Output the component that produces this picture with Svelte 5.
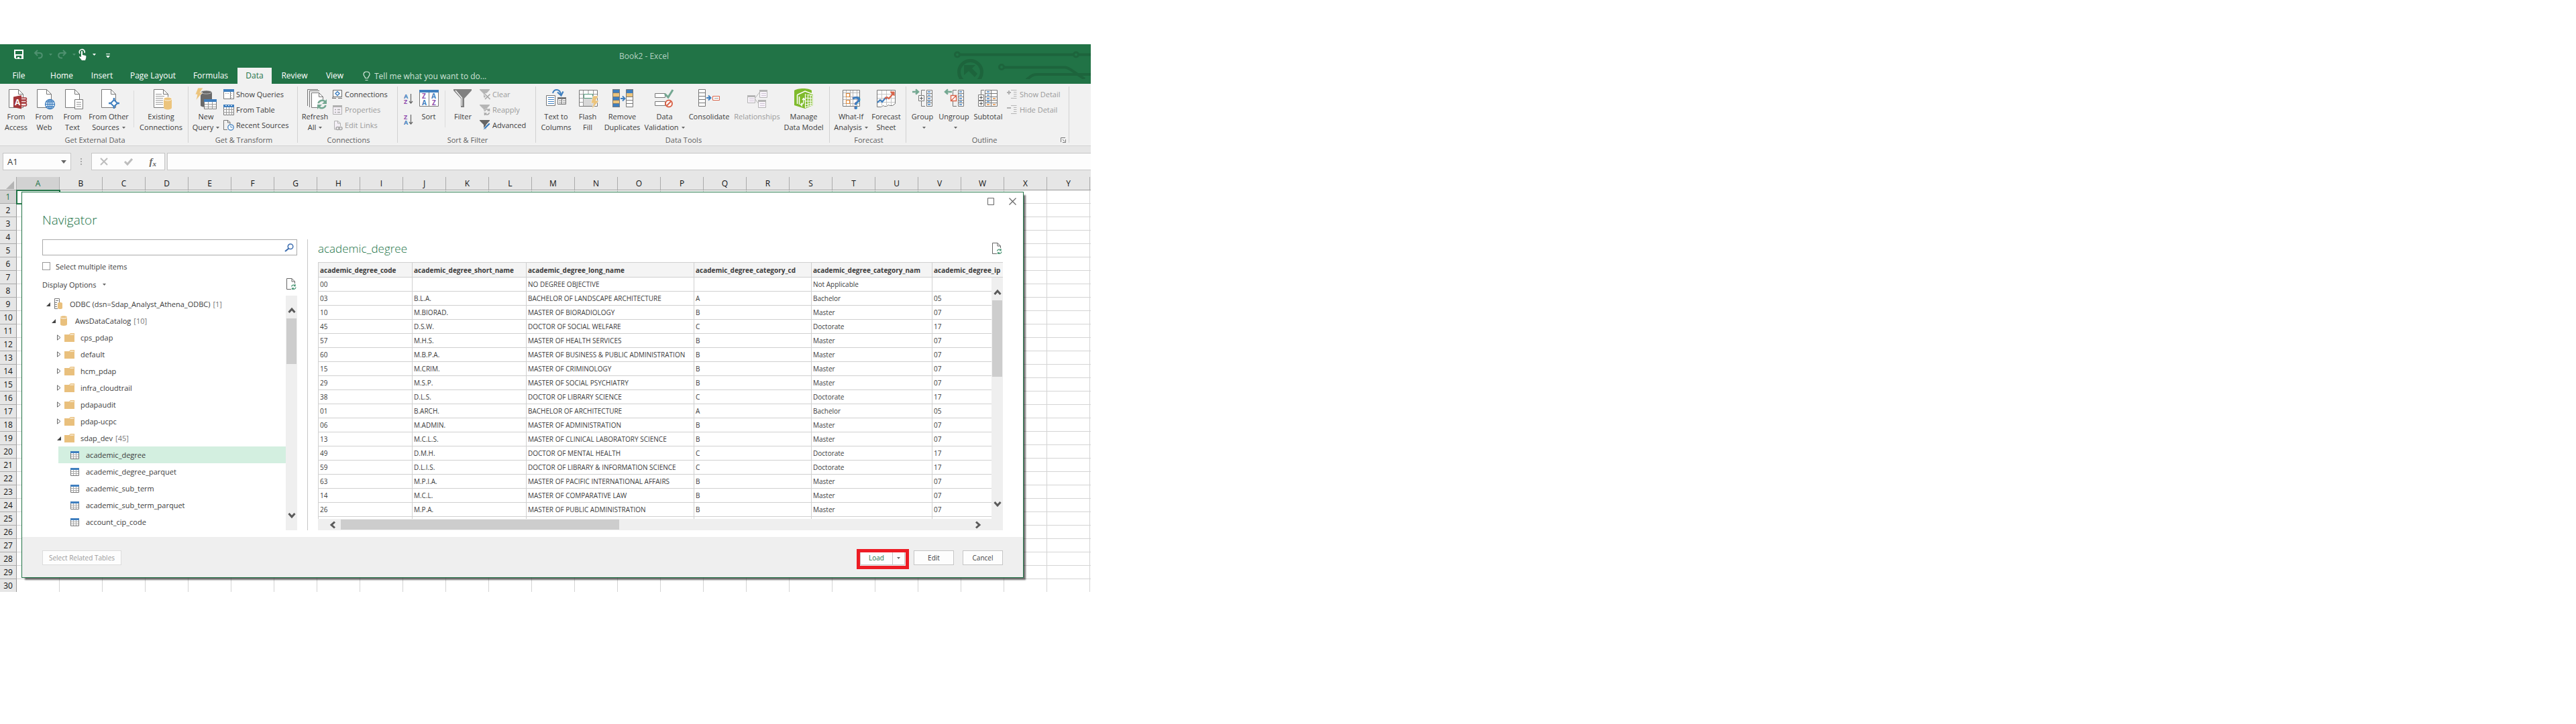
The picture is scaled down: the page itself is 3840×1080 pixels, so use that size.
<script>
  const tabs = [
    { label: 'Home', width: 60 },
    { label: 'Insert', width: 56 },
    { label: 'Page Layout', width: 92 },
    { label: 'Formulas', width: 76 },
    { label: 'Data', width: 51, active: true },
    { label: 'Review', width: 64 },
    { label: 'View', width: 52 },
  ];

  const groups = [
    {
      label: 'Get External Data', width: 280,
      items: [
        { type: 'big', icon: 'access', lines: ['From', 'Access'], width: 42 },
        { type: 'big', icon: 'web', lines: ['From', 'Web'], width: 42 },
        { type: 'big', icon: 'text', lines: ['From', 'Text'], width: 42 },
        { type: 'big', icon: 'other', lines: ['From Other', 'Sources'], width: 66, caret: true },
        { type: 'line' },
        { type: 'big', icon: 'existing', lines: ['Existing', 'Connections'], width: 72 },
      ],
    },
    {
      label: 'Get & Transform', width: 162,
      items: [
        { type: 'big', icon: 'query', lines: ['New', 'Query'], width: 46, caret: true },
        { type: 'stack', rows: [['queries', 'Show Queries'], ['fromtable', 'From Table'], ['recent', 'Recent Sources']] },
      ],
    },
    {
      label: 'Connections', width: 148,
      items: [
        { type: 'big', icon: 'refresh', lines: ['Refresh', 'All'], width: 45, caret: true },
        { type: 'stack', rows: [['conn', 'Connections'], ['props', 'Properties', true], ['links', 'Edit Links', true]] },
      ],
    },
    {
      label: 'Sort & Filter', width: 205,
      items: [
        { type: 'az' },
        { type: 'big', icon: 'sort', lines: ['Sort'], width: 40 },
        { type: 'line' },
        { type: 'big', icon: 'filter', lines: ['Filter'], width: 44 },
        { type: 'stack', rows: [['clear', 'Clear', true], ['reapply', 'Reapply', true], ['advanced', 'Advanced']] },
      ],
    },
    {
      label: 'Data Tools', width: 437,
      items: [
        { type: 'big', icon: 'columns', lines: ['Text to', 'Columns'], width: 54 },
        { type: 'big', icon: 'flash', lines: ['Flash', 'Fill'], width: 40 },
        { type: 'big', icon: 'dupes', lines: ['Remove', 'Duplicates'], width: 63 },
        { type: 'big', icon: 'validate', lines: ['Data', 'Validation'], width: 63, caret: true },
        { type: 'big', icon: 'consolidate', lines: ['Consolidate'], width: 70 },
        { type: 'big', icon: 'relations', lines: ['Relationships'], width: 73, disabled: true },
        { type: 'big', icon: 'model', lines: ['Manage', 'Data Model'], width: 66 },
      ],
    },
    {
      label: 'Forecast', width: 113,
      items: [
        { type: 'big', icon: 'whatif', lines: ['What-If', 'Analysis'], width: 57, caret: true },
        { type: 'big', icon: 'forecast', lines: ['Forecast', 'Sheet'], width: 48 },
      ],
    },
    {
      label: 'Outline', width: 242, launcher: true,
      items: [
        { type: 'big', icon: 'group', lines: ['Group', ''], width: 42, caret: true },
        { type: 'big', icon: 'ungroup', lines: ['Ungroup', ''], width: 52, caret: true },
        { type: 'big', icon: 'subtotal', lines: ['Subtotal'], width: 50 },
        { type: 'stack', rows: [['showdetail', 'Show Detail', true], ['hidedetail', 'Hide Detail', true]] },
      ],
    },
  ];

  const columns = [...'ABCDEFGHIJKLMNOPQRSTUVWXY'];
  const sheetRows = Array.from({ length: 30 }, (_, i) => i + 1);

  const tree = [
    { level: 0, icon: 'server', name: 'ODBC (dsn=Sdap_Analyst_Athena_ODBC)', count: 1, open: true },
    { level: 1, icon: 'database', name: 'AwsDataCatalog', count: 10, open: true },
    { level: 2, icon: 'folder', name: 'cps_pdap', open: false },
    { level: 2, icon: 'folder', name: 'default', open: false },
    { level: 2, icon: 'folder', name: 'hcm_pdap', open: false },
    { level: 2, icon: 'folder', name: 'infra_cloudtrail', open: false },
    { level: 2, icon: 'folder', name: 'pdapaudit', open: false },
    { level: 2, icon: 'folder', name: 'pdap-ucpc', open: false },
    { level: 2, icon: 'folder', name: 'sdap_dev', count: 45, open: true },
    { level: 3, icon: 'table', name: 'academic_degree', selected: true },
    { level: 3, icon: 'table', name: 'academic_degree_parquet' },
    { level: 3, icon: 'table', name: 'academic_sub_term' },
    { level: 3, icon: 'table', name: 'academic_sub_term_parquet' },
    { level: 3, icon: 'table', name: 'account_cip_code' },
  ];

  const fields = [
    'academic_degree_code', 'academic_degree_short_name', 'academic_degree_long_name',
    'academic_degree_category_cd', 'academic_degree_category_nam', 'academic_degree_ip',
  ];

  const records = [
    ['00', '', 'NO DEGREE OBJECTIVE', '', 'Not Applicable', ''],
    ['03', 'B.L.A.', 'BACHELOR OF LANDSCAPE ARCHITECTURE', 'A', 'Bachelor', '05'],
    ['10', 'M.BIORAD.', 'MASTER OF BIORADIOLOGY', 'B', 'Master', '07'],
    ['45', 'D.S.W.', 'DOCTOR OF SOCIAL WELFARE', 'C', 'Doctorate', '17'],
    ['57', 'M.H.S.', 'MASTER OF HEALTH SERVICES', 'B', 'Master', '07'],
    ['60', 'M.B.P.A.', 'MASTER OF BUSINESS & PUBLIC ADMINISTRATION', 'B', 'Master', '07'],
    ['15', 'M.CRIM.', 'MASTER OF CRIMINOLOGY', 'B', 'Master', '07'],
    ['29', 'M.S.P.', 'MASTER OF SOCIAL PSYCHIATRY', 'B', 'Master', '07'],
    ['38', 'D.L.S.', 'DOCTOR OF LIBRARY SCIENCE', 'C', 'Doctorate', '17'],
    ['01', 'B.ARCH.', 'BACHELOR OF ARCHITECTURE', 'A', 'Bachelor', '05'],
    ['06', 'M.ADMIN.', 'MASTER OF ADMINISTRATION', 'B', 'Master', '07'],
    ['13', 'M.C.L.S.', 'MASTER OF CLINICAL LABORATORY SCIENCE', 'B', 'Master', '07'],
    ['49', 'D.M.H.', 'DOCTOR OF MENTAL HEALTH', 'C', 'Doctorate', '17'],
    ['59', 'D.L.I.S.', 'DOCTOR OF LIBRARY & INFORMATION SCIENCE', 'C', 'Doctorate', '17'],
    ['63', 'M.P.I.A.', 'MASTER OF PACIFIC INTERNATIONAL AFFAIRS', 'B', 'Master', '07'],
    ['14', 'M.C.L.', 'MASTER OF COMPARATIVE LAW', 'B', 'Master', '07'],
    ['26', 'M.P.A.', 'MASTER OF PUBLIC ADMINISTRATION', 'B', 'Master', '07'],
    ['', '', '', '', '', ''],
  ];
</script>

{#snippet caret()}
  <svg class="caret" width="5" height="3" viewBox="0 0 5 3" aria-hidden="true"><path d="M0 0h5L2.5 3z" fill="currentColor" /></svg>
{/snippet}

{#snippet page()}
  <path d="M5.5 1.5h14l7 7v20h-21z" fill="#fff" stroke="#777" />
  <path d="M19.5 1.5v7h7" fill="none" stroke="#777" />
{/snippet}

{#snippet bigIcon(name)}
  <svg width="32" height="32" viewBox="0 0 32 32" fill="none" aria-hidden="true">
    {#if name === 'access'}
      {@render page()}
      <path d="M23 14h7c2 0 2 3 0 3h-7m0 1h7c2 0 2 3 0 3h-7m0 1h7c2 0 2 4 0 4h-7z" fill="#f7e6e7" stroke="#a4373a" stroke-width="1.6" />
      <path d="M12 12.500l12-2.500v20.500l-12-2.500z" fill="#a4373a" />
      <text x="14" y="25" font-size="12" font-weight="700" fill="#fff" font-family="Open Sans, sans-serif">A</text>
    {:else if name === 'web'}
      {@render page()}
      <g stroke="#3f7fbf" stroke-width="1.300">
        <circle cx="24.500" cy="23.500" r="7" fill="#fff" />
        <ellipse cx="24.500" cy="23.500" rx="3.200" ry="7" />
        <path d="M17.500 23.500h14M24.500 16.500v14M18.500 20h12M18.500 27h12" />
      </g>
    {:else if name === 'text'}
      {@render page()}
      <path d="M19.500 16.500h12v14h-12z" fill="#fff" stroke="#777" />
      <path d="M22 20.500h7M22 23.500h7M22 26.500h7" stroke="#999" />
    {:else if name === 'other'}
      {@render page()}
      <path d="M24 14v16M16 22h16" stroke="#3f7fbf" stroke-width="2.500" />
      <path d="M24 17l5 5-5 5-5-5z" fill="#fff" stroke="#3f7fbf" stroke-width="2" />
    {:else if name === 'existing'}
      {@render page()}
      <path d="M8 8.500h9M8 11.500h13M8 14.500h11M8 17.500h11M8 20.500h11M8 23.500h11" stroke="#999" />
      <path d="M20 15.500v13c0 4 12 4 12 0v-13z" fill="#ecc47c" />
      <ellipse cx="26" cy="15.500" rx="6" ry="2.500" fill="#ecc47c" stroke="#fff" stroke-width=".8" />
    {:else if name === 'query'}
      <path d="M8 5.500v20c0 3 17 3 17 0v-20z" fill="#6a6a6a" />
      <ellipse cx="16.500" cy="5.500" rx="8" ry="2.500" fill="#6a6a6a" stroke="#ddd" stroke-width=".7" />
      <path d="M4 -1h8L7 6h4L1 18 3 9H0z" fill="#ecc47c" stroke="#f1f1f1" stroke-width=".8" />
      <path d="M13.500 16.500h18v14h-18z" fill="#fff" stroke="#777" />
      <path d="M14 23.500h17M14 27.500h17M19.500 20v11M25.500 20v11" stroke="#999" />
      <path d="M13 16h19v4H13z" fill="#3f7fbf" />
    {:else if name === 'refresh'}
      <path d="M4.500 26V1.500H20M7.500 28V3.500H22" stroke="#777" />
      <path d="M10.500 6.500h11l6 6v16h-17z" fill="#fff" stroke="#777" />
      <path d="M21.500 6.500v6h6" stroke="#777" />
      <circle cx="26" cy="23.500" r="7" fill="#f1f1f1" />
      <path d="M20.500 22a6 6 0 0 1 10-2.500M31.500 25a6 6 0 0 1-10 2.500" stroke="#74a892" stroke-width="2.600" />
      <path d="M33 16v7h-7zM19 31v-7h7z" fill="#74a892" />
    {:else if name === 'sort'}
      <path d="M2.500 2.500h28v24h-28z" fill="#fff" stroke="#777" />
      <path d="M2 2h29v4H2z" fill="#3f7fbf" />
      <path d="M16.500 6v20" stroke="#777" />
      <g font-size="10" font-weight="700" font-family="Open Sans, sans-serif">
        <text x="6" y="15" fill="#8f4fae">Z</text><text x="20" y="15" fill="#3f7fbf">A</text>
        <text x="6" y="25" fill="#3f7fbf">A</text><text x="21" y="25" fill="#8f4fae">Z</text>
      </g>
    {:else if name === 'filter'}
      <path d="M2 1h27v2L18 15v13h-5V15L2 3z" fill="#808080" />
      <path d="M5 3l9.500 11v12" stroke="#fff" stroke-width="1.200" />
    {:else if name === 'columns'}
      <path d="M1.500 10.500h13v15h-13z" fill="#fff" stroke="#777" />
      <path d="M4 13.500h9M4 16.500h9M4 19.500h9M4 22.500h9" stroke="#3f7fbf" />
      <path d="M18.500 13.500h12v10h-12z" fill="#fff" stroke="#777" />
      <path d="M18 13h13v3H18z" fill="#777" />
      <path d="M20 18.500h4m2 0h4M20 21.500h4m2 0h4M24.500 16v8" stroke="#777" />
      <path d="M11 7c2-7 11-7 12 2" stroke="#3f7fbf" stroke-width="2" />
      <path d="M18 5.500l5.500 5 3-6" stroke="#3f7fbf" stroke-width="2.200" />
    {:else if name === 'flash'}
      <path d="M3.500 2.500h27v24h-27z" fill="#fff" stroke="#777" />
      <path d="M4 8.500h26M4 14.500h26M4 20.500h26M9.500 3v23M24.500 3v23M17 3v5" stroke="#999" />
      <path d="M10 15h14v11H10z" fill="#d8d8d8" />
      <path d="M10.500 8.500h13v6h-13z" fill="#fff" stroke="#4e9878" />
      <path d="M24 11h8l-4 7h5L22 31l3-9h-4z" fill="#ecc47c" stroke="#f1f1f1" stroke-width=".6" />
    {:else if name === 'dupes'}
      <path d="M1 1h11v27H1z" fill="#3f7fbf" /><path d="M1 7h11v5H1zM1 17h11v5H1z" fill="#ecc47c" />
      <path d="M22 1h10v6H22z" fill="#3f7fbf" /><path d="M22 7h10v5H22z" fill="#ecc47c" /><path d="M22 12h10v16H22z" fill="#fff" />
      <path d="M1.500 1.500h10v26h-10zM21.500 1.500h10v26h-10zM1 6.500h10M1 12.500h10M1 17.500h10M1 22.500h10M22 12.500h10M22 17.500h10M22 22.500h10" stroke="#777" />
      <path d="M13 15h6M16 11.500l3.500 3.500-3.500 3.500" stroke="#3f7fbf" stroke-width="2" />
    {:else if name === 'validate'}
      <path d="M1.500 7.500h15v6h-15zM1.500 19.500h15v6h-15z" fill="#fff" stroke="#777" />
      <path d="M16 8l5 5L28 2" stroke="#74a892" stroke-width="3" />
      <circle cx="22" cy="22.500" r="5" fill="#fff" stroke="#d9644a" stroke-width="2" />
      <path d="M25.500 19l-7 7" stroke="#d9644a" stroke-width="2" />
    {:else if name === 'consolidate'}
      <path d="M.5 1.500h10v25H.5z" fill="#fff" stroke="#777" />
      <path d="M1 6.500h9M1 11.500h9M1 16.500h9M1 21.500h9" stroke="#777" />
      <path d="M12 14h6M15 10.500l3.500 3.500-3.500 3.500" stroke="#3f7fbf" stroke-width="2" />
      <path d="M21.500 11.500h10v6h-10z" fill="#fff" stroke="#d9644a" /><path d="M24 14.500h6" stroke="#999" />
    {:else if name === 'relations'}
      <path d="M12 15l7-9M12 15l6 8" stroke="#b5b5b5" />
      <path d="M1.500 10.500h11v11h-11zM19.500 2.500h11v11h-11zM17.500 17.500h11v11h-11z" fill="#f7f3f9" stroke="#b5b5b5" />
      <path d="M1 10h12v3H1zM19 2h12v3H19zM17 17h12v3H17z" fill="#b5b5b5" />
      <path d="M4 15.500h7M4 18.500h7M22 7.500h7M22 10.500h7M20 22.500h7M20 25.500h7" stroke="#d0c4d6" />
    {:else if name === 'model'}
      <path d="M2 3C7-1 24-1 28 3v4l2 1v17l-12 5L2 25z" fill="#7fba2c" />
      <path d="M6.500 9.500L18 4l12 4.500M6.500 9.500V23M9.500 12v12" stroke="#fff" stroke-width="1.500" />
      <path d="M18.500 8v21M18 8.500l11 2v14L18 28M22.500 9v18M26 10v15M18 14l11 1M18 19h11M18 24l11-2" stroke="#fff" stroke-width="1.200" />
      <path d="M12 24c4 0 4-2 4-9M14 17l2-2.500 2 2.500M14 21.500L11.500 24l2.500 2.500" stroke="#fff" stroke-width="1.300" />
    {:else if name === 'whatif'}
      <path d="M3.500 2.500h25v24h-25z" fill="#fff" stroke="#777" />
      <path d="M4 6.500h24M4 12.500h24M4 16.500h24M4 22.500h24M8.500 3v23M14.500 3v23M18.500 3v23M24.500 3v23" stroke="#b5b5b5" />
      <path d="M8.500 7.500h5v5h-5zM8.500 17.500h5v5h-5z" fill="#fff" stroke="#e08a3c" stroke-width="1.200" />
      <text x="17" y="31" font-size="27" font-weight="700" fill="#3f7fbf" font-family="Open Sans, sans-serif">?</text>
    {:else if name === 'forecast'}
      <path d="M2.500 2.500h27v20l-4 3h-4l-2-1-3 2h-3l-2-1-3 2h-6z" fill="#fff" stroke="#777" />
      <path d="M3 8.500h26M3 14.500h26M3 20.500h26M9.500 3v22M16.500 3v22M23.500 3v22" stroke="#c4c4c4" />
      <path d="M3 21l4-4 3 3 5-6 2 2" stroke="#3f7fbf" stroke-width="2.200" />
      <path d="M14 15l3-2 3 2 7-8" stroke="#d9644a" stroke-width="2.200" /><path d="M22 5h6v6z" fill="#d9644a" stroke="#d9644a" />
    {:else if name === 'group' || name === 'ungroup'}
      <path d="M22.500 2.500h8v24h-8z" fill="#fff" stroke="#777" />
      <path d="M22 7.500h8M22 12.500h8M22 17.500h8M22 21.500h8" stroke="#777" />
      <path d="M24 5h4M24 10h4M24 15h4M24 19.500h4M24 24h4" stroke="#3f7fbf" stroke-width="1.300" />
      <path d="M20 2.500h-5.500v8M14.500 19v7.500H20" stroke="#777" />
      {#if name === 'group'}
        <path d="M1 5h9M6 1.500L10 5l-4 3.500" stroke="#74a892" stroke-width="2.400" />
        <path d="M10.500 10.500h8v8h-8z" fill="#fff" stroke="#777" /><path d="M12 14.500h5M14.500 12v5" stroke="#555" />
      {:else}
        <path d="M13 5H3M7 1.500L3 5l4 3.500" stroke="#74a892" stroke-width="2.400" />
        <path d="M11.500 10.500h8v8h-8zM12 18l7-7" fill="#fff" stroke="#d9644a" stroke-width="1.400" />
      {/if}
    {:else if name === 'subtotal'}
      <path d="M11.500 2.500h18v24h-18z" fill="#fff" stroke="#777" />
      <path d="M11 7.500h18M11 12.500h18M11 17.500h18M11 21.500h18M20.500 3v23" stroke="#777" />
      <path d="M14 5h4M14 10h4M14 15h4M14 19.500h4" stroke="#3f7fbf" stroke-width="1.300" />
      <path d="M23 15h4M23 24h4M14 24h4" stroke="#e08a3c" stroke-width="1.300" />
      <path d="M10 2.500H5.500v8" stroke="#777" />
      <path d="M1.500 9.500h8v8h-8zM1.500 18.500h8v8h-8z" fill="#fff" stroke="#777" /><path d="M3 13.500h5M5.500 11v5M3 22.500h5M5.500 20v5" stroke="#555" />
    {/if}
  </svg>
{/snippet}

{#snippet smallIcon(name)}
  <svg width="16" height="16" viewBox="0 0 16 16" fill="none" aria-hidden="true">
    {#if name === 'queries'}
      <path d="M.5 1.500h15v13H.5z" fill="#fff" stroke="#777" /><path d="M0 0h16v4H0z" fill="#3f7fbf" />
      <path d="M10.500 4v10" stroke="#777" /><path d="M3 6.500h6M12 6.500h2M12 9.500h2M12 12.500h2" stroke="#999" stroke-dasharray="1 1" />
    {:else if name === 'fromtable'}
      <path d="M.5.500h15v15H.5z" fill="#fff" stroke="#777" /><path d="M0 0h16v4H0z" fill="#3f7fbf" />
      <path d="M3 1.500h2M7 1.500h2M11 1.500h2" stroke="#fff" /><path d="M0 7.500h16M0 11.500h16M4.500 4v12M8.500 4v12M12.500 4v12" stroke="#999" />
    {:else if name === 'recent'}
      <path d="M6 14.500H.5v-14H7l3 3v3M6.500.5V4H10" stroke="#777" />
      <circle cx="11" cy="11" r="4.200" fill="#fff" stroke="#3f7fbf" stroke-width="1.300" /><path d="M11 8.500V11h2.500" stroke="#3f7fbf" />
    {:else if name === 'conn'}
      <path d="M1.500 1.500h13v10h-13z" fill="#fff" stroke="#666" /><path d="M0 13.500h6M9 13.500h6M1 11.500v2" stroke="#666" />
      <path d="M8 3.500L11 6.500 8 9.500 5 6.500z" stroke="#3f7fbf" stroke-width="1.500" />
    {:else if name === 'props'}
      <path d="M1.500 1.500h13v13h-13z" fill="#f3eef5" stroke="#b0b0b0" /><path d="M1 1h14v3H1z" fill="#b0b0b0" />
      <path d="M4 7.500h2M8 7.500h4M4 11.500h2M8 11.500h4" stroke="#a8a8a8" stroke-width="1.500" />
    {:else if name === 'links'}
      <path d="M6 14H3.500V1.500H9l3.500 3.500v4M8.500 1.500V5h4" fill="#f3eef5" stroke="#b0b0b0" />
      <rect x="6" y="10.500" width="5" height="4" rx="2" stroke="#a8a8a8" stroke-width="1.500" /><rect x="10" y="10.500" width="5" height="4" rx="2" stroke="#a8a8a8" stroke-width="1.500" />
    {:else if name === 'clear' || name === 'reapply' || name === 'advanced'}
      <path d="M0 0h15v1L9.500 7v7L6 12V7L0 1z" fill={name === 'advanced' ? '#666' : '#b5b5b5'} />
      {#if name === 'clear'}
        <path d="M8 7l8 8M16 7l-8 8" stroke="#f1f1f1" stroke-width="4" /><path d="M8 7.500l7.500 7.500M15.500 7.500L8 15" stroke="#a8a8a8" stroke-width="1.600" />
      {:else if name === 'reapply'}
        <circle cx="11" cy="11" r="5" fill="#f1f1f1" /><path d="M7.500 10a4 4 0 0 1 7-1.500V6m0 3h-3M14.500 12a4 4 0 0 1-7 1.500V16m0-3h3" stroke="#a8a8a8" stroke-width="1.500" />
      {:else}
        <path d="M5 15l2-4 7-7 2 2-7 7z" fill="#3f7fbf" stroke="#f1f1f1" stroke-width=".8" />
      {/if}
    {:else if name === 'showdetail' || name === 'hidedetail'}
      <path d="M6 1.500h8.500M10 4.500h4.500M10 7.500h4.500M10 10.500h4.500M6 13.500h8.500" stroke="#b5b5b5" />
      <path d="M0 5h6" stroke="#b0b0b0" stroke-width="2" />
      {#if name === 'showdetail'}<path d="M3 2v6" stroke="#b0b0b0" stroke-width="2" />{/if}
    {/if}
  </svg>
{/snippet}

{#snippet azIcon(first, second)}
  <svg width="16" height="18" viewBox="0 0 16 18" fill="none" aria-hidden="true">
    <g font-size="9" font-weight="700" font-family="Open Sans, sans-serif">
      <text x="1" y="8" fill={first === 'A' ? '#3f7fbf' : '#8f4fae'}>{first}</text>
      <text x="1" y="16" fill={second === 'A' ? '#3f7fbf' : '#8f4fae'}>{second}</text>
    </g>
    <path d="M11.500 1v14M9 12l2.500 3 2.500-3" stroke="#666" stroke-width="1.200" />
  </svg>
{/snippet}

{#snippet refreshPage()}
  <svg width="15" height="18" viewBox="0 0 15 18" fill="none" aria-hidden="true">
    <path d="M7 16.500H.5V.5H8L12.500 5v3M8 .5V5h4.500" stroke="#666" />
    <path d="M7.500 12.500a3.300 3.300 0 0 1 5.500-1.500V9m.5 2.500H11M14 13.500a3.300 3.300 0 0 1-5.500 2V17m-.5-2h3" stroke="#4e9878" stroke-width="1.300" />
  </svg>
{/snippet}

{#snippet chevron(d, w, h)}
  <svg width={w} height={h} viewBox="0 0 {w} {h}" fill="none" aria-hidden="true"><path {d} stroke="#5a5a5a" stroke-width="3" /></svg>
{/snippet}

<main class="excel">
  <header class="title">
    <svg class="circuit" width="204" height="42" viewBox="0 0 204 42" fill="none" stroke="#1d643c" aria-hidden="true">
      <g stroke-width="3"><circle cx="5" cy="5.500" r="3.500" /><circle cx="182" cy="5.500" r="3.500" /><circle cx="71" cy="24" r="3.500" /></g>
      <path d="M8 5.500h171M186 5.500h18M74 24.500h92c6 0 12 7 29 17.500M108 43c8-6 9-8 17-8h79" stroke-width="4" />
      <circle cx="24.500" cy="31.500" r="17" stroke-width="5" />
      <path d="M15 21h17l-5 5 8 8-4 5-9-9-7 6z" fill="#1d643c" stroke="none" />
    </svg>
    <div class="quick">
      <button class="save" aria-label="Save"><svg width="14" height="14" viewBox="0 0 14 14"><path d="M0 0h14v14H2l-2-2z" fill="#fff" /><path d="M2 2h10v5H2zM3 9h8v4H8v-2H5v2H3z" fill="#217346" /></svg></button>
      <button class="undo" aria-label="Undo"><svg width="15" height="14" viewBox="0 0 15 14" fill="none"><path d="M6 1L2 5l4 4M2 5h7c5 0 5 7 0 7.500H7" stroke="#4f9170" stroke-width="2" /></svg><span>{@render caret()}</span></button>
      <button class="undo" aria-label="Redo"><svg width="15" height="14" viewBox="0 0 15 14" fill="none"><path d="M9 1l4 4-4 4M13 5H6c-5 0-5 7 0 7.500h2" stroke="#4f9170" stroke-width="2" /></svg><span>{@render caret()}</span></button>
      <button class="touch" aria-label="Touch mode"><svg width="12" height="17" viewBox="0 0 12 17" fill="none"><path d="M2 7A4 4 0 1 1 9 6" stroke="#fff" stroke-width="1.600" /><path d="M4 4c0-1.500 2-1.500 2 0v5l5 1c1 1 0 5-1 7H5l-4-5c0-1 1-1 3 0z" fill="#fff" /></svg><span>{@render caret()}</span></button>
      <button class="customize" aria-label="Customize toolbar"><svg width="6" height="7" viewBox="0 0 6 7"><path d="M0 0h6v1H0zM0 3h6L3 6.500z" fill="#fff" /></svg></button>
    </div>
    <div class="doc">Book2 - Excel</div>
  </header>
  <nav class="tabs">
    <button class="file">File</button>
    {#each tabs as tab}
      <button class="tab" class:active={tab.active} style="width: {tab.width}px">{tab.label}</button>
    {/each}
    <label class="tell">
      <svg width="11" height="15" viewBox="0 0 11 15" fill="none" aria-hidden="true"><path d="M3.500 10.500C3.500 8 1 7.500 1 4.800 1 2.500 3 1 5.500 1S10 2.500 10 4.800C10 7.500 7.500 8 7.500 10.500zM3.500 13.500h4" stroke="#d8e8de" stroke-width="1.200" /></svg>
      <input aria-label="Tell me what you want to do" placeholder="Tell me what you want to do..." />
    </label>
  </nav>

  <section class="ribbon">
    {#each groups as group}
      <div class="group" style="width: {group.width}px">
        <div class="items">
          {#each group.items as item}
            {#if item.type === 'big'}
              <button class="big" disabled={item.disabled} style="width: {item.width}px">
                {@render bigIcon(item.icon)}
                {#each item.lines as line, i}
                  <span>{line}{#if item.caret && i === 1}{@render caret()}{/if}</span>
                {/each}
              </button>
            {:else if item.type === 'stack'}
              <div class="stack">
                {#each item.rows as [icon, label, off]}
                  <button disabled={off}>{@render smallIcon(icon)}{label}</button>
                {/each}
              </div>
            {:else if item.type === 'az'}
              <div class="az">
                <button aria-label="Sort A to Z">{@render azIcon('A', 'Z')}</button>
                <button aria-label="Sort Z to A">{@render azIcon('Z', 'A')}</button>
              </div>
            {:else}
              <span class="line"></span>
            {/if}
          {/each}
        </div>
        <div class="caption">
          <span>{group.label}</span>
          {#if group.launcher}
            <button aria-label="Outline settings"><svg width="8" height="8" viewBox="0 0 8 8" fill="none"><path d="M.5 7V.5H7M3 3l3 3M7.500 3v4.500H3" stroke="#777" /></svg></button>
          {/if}
        </div>
      </div>
      <span class="divider"></span>
    {/each}
  </section>

  <section class="formula">
    <div class="namebox"><input aria-label="Name box" value="A1" /><button aria-label="Name list"><svg width="8" height="5" viewBox="0 0 8 5"><path d="M0 0h8L4 5z" fill="#666" /></svg></button></div>
    <svg class="dots" width="2" height="10" viewBox="0 0 2 10" aria-hidden="true"><path d="M0 0h2v2H0zM0 4h2v2H0zM0 8h2v2H0z" fill="#a8a8a8" /></svg>
    <div class="fx">
      <button aria-label="Cancel entry"><svg width="12" height="10" viewBox="0 0 12 10" fill="none"><path d="M1 0l10 10M11 0L1 10" stroke="#bdbdbd" stroke-width="2" /></svg></button>
      <button aria-label="Enter"><svg width="13" height="11" viewBox="0 0 13 11" fill="none"><path d="M1 5l4 4 7-8" stroke="#bdbdbd" stroke-width="3" /></svg></button>
      <button class="fn" aria-label="Insert function">f<sub>x</sub></button>
    </div>
    <input class="entry" aria-label="Formula bar" />
  </section>

  <div class="workspace">
    <table class="sheet">
      <colgroup><col class="rowcol" />{#each columns as c}<col class="datacol" />{/each}<col /></colgroup>
      <thead>
        <tr>
          <th class="corner"><svg width="12" height="12" viewBox="0 0 12 12" aria-hidden="true"><path d="M12 0v12H0z" fill="#b4b4b4" /></svg></th>
          {#each columns as c, i}<th class:current={i === 0}>{c}</th>{/each}
          <th class="tail"></th>
        </tr>
      </thead>
      <tbody>
        {#each sheetRows as n}
          <tr>
            <th class:current={n === 1}>{n}</th>
            {#each columns as c, i}<td class:cell={n === 1 && i === 0}></td>{/each}
            <td class="tail"></td>
          </tr>
        {/each}
      </tbody>
    </table>

    <div class="dialog" role="dialog" aria-labelledby="dialog-title">
      <div class="controls">
        <button aria-label="Maximize"><svg width="11" height="11" viewBox="0 0 11 11" fill="none"><path d="M.5.500h9v10h-9z" stroke="#666" /></svg></button>
        <button aria-label="Close"><svg width="11" height="11" viewBox="0 0 11 11" fill="none"><path d="M.5.500l10 10M10.500.500l-10 10" stroke="#666" stroke-width="1.200" /></svg></button>
      </div>
      <h1 id="dialog-title">Navigator</h1>
      <div class="panes">
        <section class="browser">
          <div class="search">
            <input aria-label="Search" />
            <button aria-label="Search"><svg width="14" height="13" viewBox="0 0 14 13" fill="none"><circle cx="9" cy="4.800" r="3.800" stroke="#3f6fb0" stroke-width="1.500" /><path d="M6.500 7.500L1 12" stroke="#3f6fb0" stroke-width="2.200" /></svg></button>
          </div>
          <label class="multi"><input type="checkbox" />Select multiple items</label>
          <div class="options">
            <button>Display Options{@render caret()}</button>
            <button class="reload" aria-label="Refresh list">{@render refreshPage()}</button>
          </div>
          <div class="tree">
            <ul>
              {#each tree as node}
                <li style="margin-left: {node.level * 8}px">
                  <button class:selected={node.selected}>
                    <span class="twist">
                      {#if node.open === true}
                        <svg width="6" height="6" viewBox="0 0 6 6"><path d="M6 0v6H0z" fill="#444" /></svg>
                      {:else if node.open === false}
                        <svg width="6" height="9" viewBox="0 0 6 9"><path d="M.5.800L5 4.500.500 8.200z" fill="#fff" stroke="#666" /></svg>
                      {/if}
                    </span>
                    <span class="glyph">
                      {#if node.icon === 'server'}
                        <svg width="13" height="17" viewBox="0 0 13 17" fill="none"><path d="M5 15.500H.5V.500h7V6M2 3.500h4M.5 6.500H4M.5 9.500H4M.5 12.500H4" stroke="#777" /><path d="M5 7.500c0-2 7-2 7 0v7c0 2-7 2-7 0z" fill="#e9c07d" /></svg>
                      {:else if node.icon === 'database'}
                        <svg width="10" height="15" viewBox="0 0 10 15"><path d="M0 2c0-2.500 10-2.500 10 0v11c0 2.500-10 2.500-10 0z" fill="#e9c07d" /><path d="M0 2.500c1 2 9 2 10 0" fill="none" stroke="#fff" /></svg>
                      {:else if node.icon === 'folder'}
                        <svg width="15" height="13" viewBox="0 0 15 13"><path d="M0 2h7l2-2h6v13H0z" fill="#e9c07d" /><path d="M9 1.500h5v1H8z" fill="#fff" /></svg>
                      {:else}
                        <svg width="13" height="12" viewBox="0 0 13 12" fill="none"><path d="M.5.500h12v11H.5z" fill="#fff" stroke="#777" /><path d="M1 5.500h11M1 8.500h11M4.500 3v8M8.500 3v8" stroke="#aaa" /><path d="M0 0h13v3H0z" fill="#3f7fbf" /></svg>
                      {/if}
                    </span>
                    {node.name}{#if node.count}<span class="count">[{node.count}]</span>{/if}
                  </button>
                </li>
              {/each}
            </ul>
            <div class="vbar">
              <button aria-label="Scroll up">{@render chevron('M1.500 8L6 3l4.500 5', 12, 9)}</button>
              <span class="thumb"></span>
              <button class="end" aria-label="Scroll down">{@render chevron('M1.500 1L6 6l4.500-5', 12, 9)}</button>
            </div>
          </div>
        </section>

        <section class="preview">
          <div class="heading">
            <h2>academic_degree</h2>
            <button class="reload" aria-label="Refresh preview">{@render refreshPage()}</button>
          </div>
          <div class="view">
            <table class="data">
              <colgroup><col class="c1" /><col class="c2" /><col class="c3" /><col class="c4" /><col class="c5" /><col /></colgroup>
              <thead><tr>{#each fields as f}<th>{f}</th>{/each}</tr></thead>
              <tbody>{#each records as r}<tr>{#each r as v}<td>{v}</td>{/each}</tr>{/each}</tbody>
            </table>
            <div class="vbar tall">
              <button aria-label="Scroll up">{@render chevron('M1.500 8L6 3l4.500 5', 12, 9)}</button>
              <span class="thumb"></span>
              <button class="end" aria-label="Scroll down">{@render chevron('M1.500 1L6 6l4.500-5', 12, 9)}</button>
            </div>
          </div>
          <div class="hbar">
            <button aria-label="Scroll left">{@render chevron('M8 1.500L3 6l5 4.500', 9, 12)}</button>
            <span class="thumb"></span>
            <button class="end" aria-label="Scroll right">{@render chevron('M1 1.500L6 6l-5 4.500', 9, 12)}</button>
          </div>
        </section>
      </div>
      <footer>
        <button class="plain related" disabled>Select Related Tables</button>
        <div class="split">
          <button class="load">Load</button>
          <button class="more" aria-label="Load options">{@render caret()}</button>
          <span class="mark"></span>
        </div>
        <button class="plain">Edit</button>
        <button class="plain">Cancel</button>
      </footer>
    </div>
  </div>
</main>

<style>
  :global(body) { background: #fff; }
  .excel, .excel :global(*) { box-sizing: border-box; }
  .excel {
    width: 100%; max-width: 1626px; margin-top: 66px; overflow: hidden;
    font-family: 'Open Sans', 'Noto Sans', sans-serif; font-size: 11px; color: #3c3c3c;
  }
  button, input { font: inherit; color: inherit; margin: 0; padding: 0; border: 0; background: none; border-radius: 0; }
  input { outline: none; min-width: 0; }
  svg { display: block; flex: none; overflow: visible; }
  h1, h2 { margin: 0; font-weight: 300; }
  ul { margin: 0; padding: 0; }

  .title { position: relative; z-index: 1; display: flex; align-items: flex-start; height: 35px; background: #217346; color: #fff; }
  .circuit { position: absolute; right: 0; top: 10px; overflow: hidden; }
  .quick { display: flex; align-items: center; height: 30px; padding-left: 21px; flex: 0 1 923px; }
  .quick button { display: flex; align-items: center; justify-content: space-between; flex: none; }
  .save { width: 29px; }
  .undo { width: 35px; color: #4f9170; }
  .undo span, .touch span { padding-right: 7px; }
  .quick .caret { margin: 0; color: inherit; }
  .quick .touch { width: 33px; margin-left: -3px; }
  .quick .customize { margin-left: 8px; padding-top: 4px; }
  .doc { line-height: 36px; font-size: 12px; color: #b5d2c2; flex: none; }

  .tabs { display: flex; gap: 2px; height: 24px; background: #217346; color: #fff; font-size: 12px; }
  .tabs button { line-height: 24px; text-align: center; flex: none; }
  .file { width: 56px; margin-right: 4px; }
  .tab.active { background: #f1f1f1; color: #217346; }
  .tell { display: flex; align-items: center; gap: 6px; margin-left: 8px; padding-left: 6px; }
  .tell input { width: 200px; }
  .tell input::placeholder { color: #cfe2d7; opacity: 1; }

  .ribbon { display: flex; height: 93px; background: #f1f1f1; border-bottom: 1px solid #d2d2d2; }
  .group { display: flex; flex-direction: column; flex: none; padding: 4px 0 0 3px; }
  .divider { width: 1px; margin: 4px 0; background: #d2d2d2; flex: none; }
  .items { display: flex; height: 72px; }
  .big { display: flex; flex-direction: column; align-items: center; flex: none; padding-top: 3px; white-space: nowrap; }
  .big svg:first-child { margin-bottom: 2px; }
  .big span { display: flex; align-items: center; justify-content: center; height: 16px; line-height: 16px; }
  .caret { margin-left: 4px; color: #666; }
  .big span .caret:only-child { margin-bottom: 0; }
  button:disabled { color: #9a9a9a; }
  .stack { padding-left: 3px; }
  .stack button { display: flex; align-items: center; gap: 3px; height: 23px; white-space: nowrap; }
  .az { display: flex; flex-direction: column; padding: 3px 0 0 5px; width: 23px; }
  .az button { height: 31px; }
  .line { width: 1px; height: 55px; margin: 6px 4px 0; background: #dcdcdc; flex: none; }
  .caption { display: flex; align-items: center; height: 16px; color: #5e5e5e; }
  .caption span { flex: 1; text-align: center; line-height: 16px; }
  .caption button { margin-right: 4px; }

  .formula { display: flex; align-items: center; height: 46px; padding-left: 4px; background: #e6e6e6; }
  .namebox, .fx, .entry { height: 26px; background: #fdfdfd; border: 1px solid #c6c6c6; }
  .namebox { display: flex; align-items: center; width: 102px; padding: 0 6px; font-size: 13px; }
  .namebox input { flex: 1; }
  .dots { margin: 0 14px; }
  .fx { display: flex; align-items: center; justify-content: space-around; width: 110px; margin-right: 3px; }
  .fn { font: italic 700 15px 'Liberation Serif', serif; color: #666; line-height: 20px; }
  .fn sub { font-size: 11px; line-height: 8px; vertical-align: -2px; }
  .entry { flex: 1; border-right: 0; }

  .workspace { position: relative; }
  .sheet { width: 100%; table-layout: fixed; border-collapse: separate; border-spacing: 0; font-size: 12px; line-height: 18px; color: #111; }
  .rowcol { width: 25px; }
  .datacol { width: 64px; }
  .sheet th, .sheet td { height: 20px; padding: 0; font-weight: 400; }
  .sheet td { border-right: 1px solid #d4d4d4; border-bottom: 1px solid #d4d4d4; }
  .sheet th { background: #e6e6e6; border-right: 1px solid #ababab; border-bottom: 1px solid #ababab; }
  .sheet thead th { border-bottom-color: #999; }
  .sheet tbody th { border-right-color: #999; }
  .sheet th.current { background: #d2d2d2; color: #217346; }
  .sheet .tail { border-right: 0; }
  .sheet tbody tr:last-child td, .sheet tbody tr:last-child th { border-bottom: 0; height: 19px; }
  .corner svg { margin: 4px 0 0 9px; }
  .sheet .cell { outline: 2px solid #217346; outline-offset: -1px; }

  .dialog {
    position: absolute; top: 22px; left: 32px; right: 100px;
    display: flex; flex-direction: column; background: #fff; border: 1px solid #217346;
    box-shadow: 4px 4px 2px -1px rgba(0, 0, 0, .55);
  }
  .controls { display: flex; justify-content: flex-end; gap: 21px; height: 30px; padding: 8px 10px 0 0; }
  .controls button { height: 11px; }
  h1 { height: 24px; margin: 0 30px 16px; font-size: 19px; line-height: 22px; color: #217346; }
  .panes { display: flex; height: 434px; margin: 0 30px 10px; }
  .browser { flex: none; width: 396px; padding-right: 15px; border-right: 1px solid #c6c6c6; }
  .search { display: flex; align-items: center; height: 24px; border: 1px solid #ababab; padding-right: 4px; }
  .search input { flex: 1; }
  .multi { display: flex; align-items: center; gap: 8px; height: 16px; margin-top: 8px; }
  .multi input { appearance: none; width: 12px; height: 12px; border: 1px solid #999; }
  .options { display: flex; align-items: center; justify-content: space-between; height: 20px; margin: 9px 0 7px; }
  .options button { display: flex; align-items: center; }
  .options .caret { margin-left: 9px; }
  .options .reload { padding-right: 1px; }
  .tree { display: flex; height: 350px; }
  .tree ul { flex: 1; list-style: none; }
  .tree li button { display: flex; align-items: center; width: 100%; height: 25px; padding-left: 6px; white-space: nowrap; }
  .tree .selected { background: #d3efe0; }
  .twist { width: 8px; }
  .glyph { display: flex; justify-content: center; width: 20px; margin-right: 7px; }
  .count { margin-left: 4px; color: #777; }
  .vbar { display: flex; flex-direction: column; align-items: center; width: 17px; background: #efefef; flex: none; }
  .vbar button { display: flex; align-items: flex-end; height: 34px; padding-bottom: 8px; flex: none; }
  .thumb { background: #cdcdcd; flex: none; }
  .vbar .thumb { width: 15px; height: 68px; }
  .vbar.tall .thumb { height: 114px; }
  .vbar .end { margin-top: auto; height: 34px; align-items: flex-start; padding: 8px 0 0; }

  .preview { display: flex; flex-direction: column; flex: 1; min-width: 0; padding-left: 15px; }
  .heading { display: flex; align-items: center; justify-content: space-between; height: 34px; padding: 0 1px 6px 0; flex: none; }
  h2 { font-size: 17px; line-height: 24px; color: #217346; }
  .view { display: grid; flex: 1; min-height: 0; overflow: hidden; }
  .view > * { grid-area: 1 / 1; }
  .view .vbar { justify-self: end; height: 360px; margin-top: 23px; z-index: 1; }
  .data { width: 100%; align-self: start; table-layout: fixed; border-collapse: separate; border-spacing: 0; font-size: 10px; border-left: 1px solid #d0d0d0; }
  .c1 { width: 140px; } .c2 { width: 170px; } .c3 { width: 250px; } .c4 { width: 175px; } .c5 { width: 180px; }
  .data th, .data td { height: 21px; padding: 0 2px; line-height: 16px; text-align: left; white-space: nowrap; overflow: hidden; border-right: 1px solid #d0d0d0; border-bottom: 1px solid #d0d0d0; }
  .data th { height: 23px; font-weight: 700; background: #f4f4f4; border-top: 1px solid #d0d0d0; }
  .data th:last-child { border-right: 0; padding-right: 0; }
  .hbar { display: flex; align-items: center; height: 17px; background: #efefef; flex: none; }
  .hbar button { display: flex; justify-content: flex-end; width: 34px; padding-right: 8px; }
  .hbar .thumb { width: 415px; height: 15px; }
  .hbar .end { margin-left: auto; margin-right: 17px; justify-content: flex-start; padding: 0 0 0 10px; }

  footer { display: flex; align-items: flex-start; gap: 13px; height: 60px; padding: 20px 30px 0; background: #efefef; font-size: 10px; }
  .plain, .split { height: 22px; background: #fdfdfd; border: 1px solid #c6c6c6; }
  .plain { width: 60px; }
  footer .related { width: 118px; margin-right: auto; border-color: #dcdcdc; }
  .split { position: relative; display: flex; width: 67px; }
  .load { flex: 1; color: #217346; }
  .more { width: 18px; border-left: 1px solid #c6c6c6; }
  .more .caret { margin: 0 auto; }
  .mark { position: absolute; top: -3px; left: -6px; width: 78px; height: 30px; border: 5px solid #ed1c24; pointer-events: none; }
</style>
